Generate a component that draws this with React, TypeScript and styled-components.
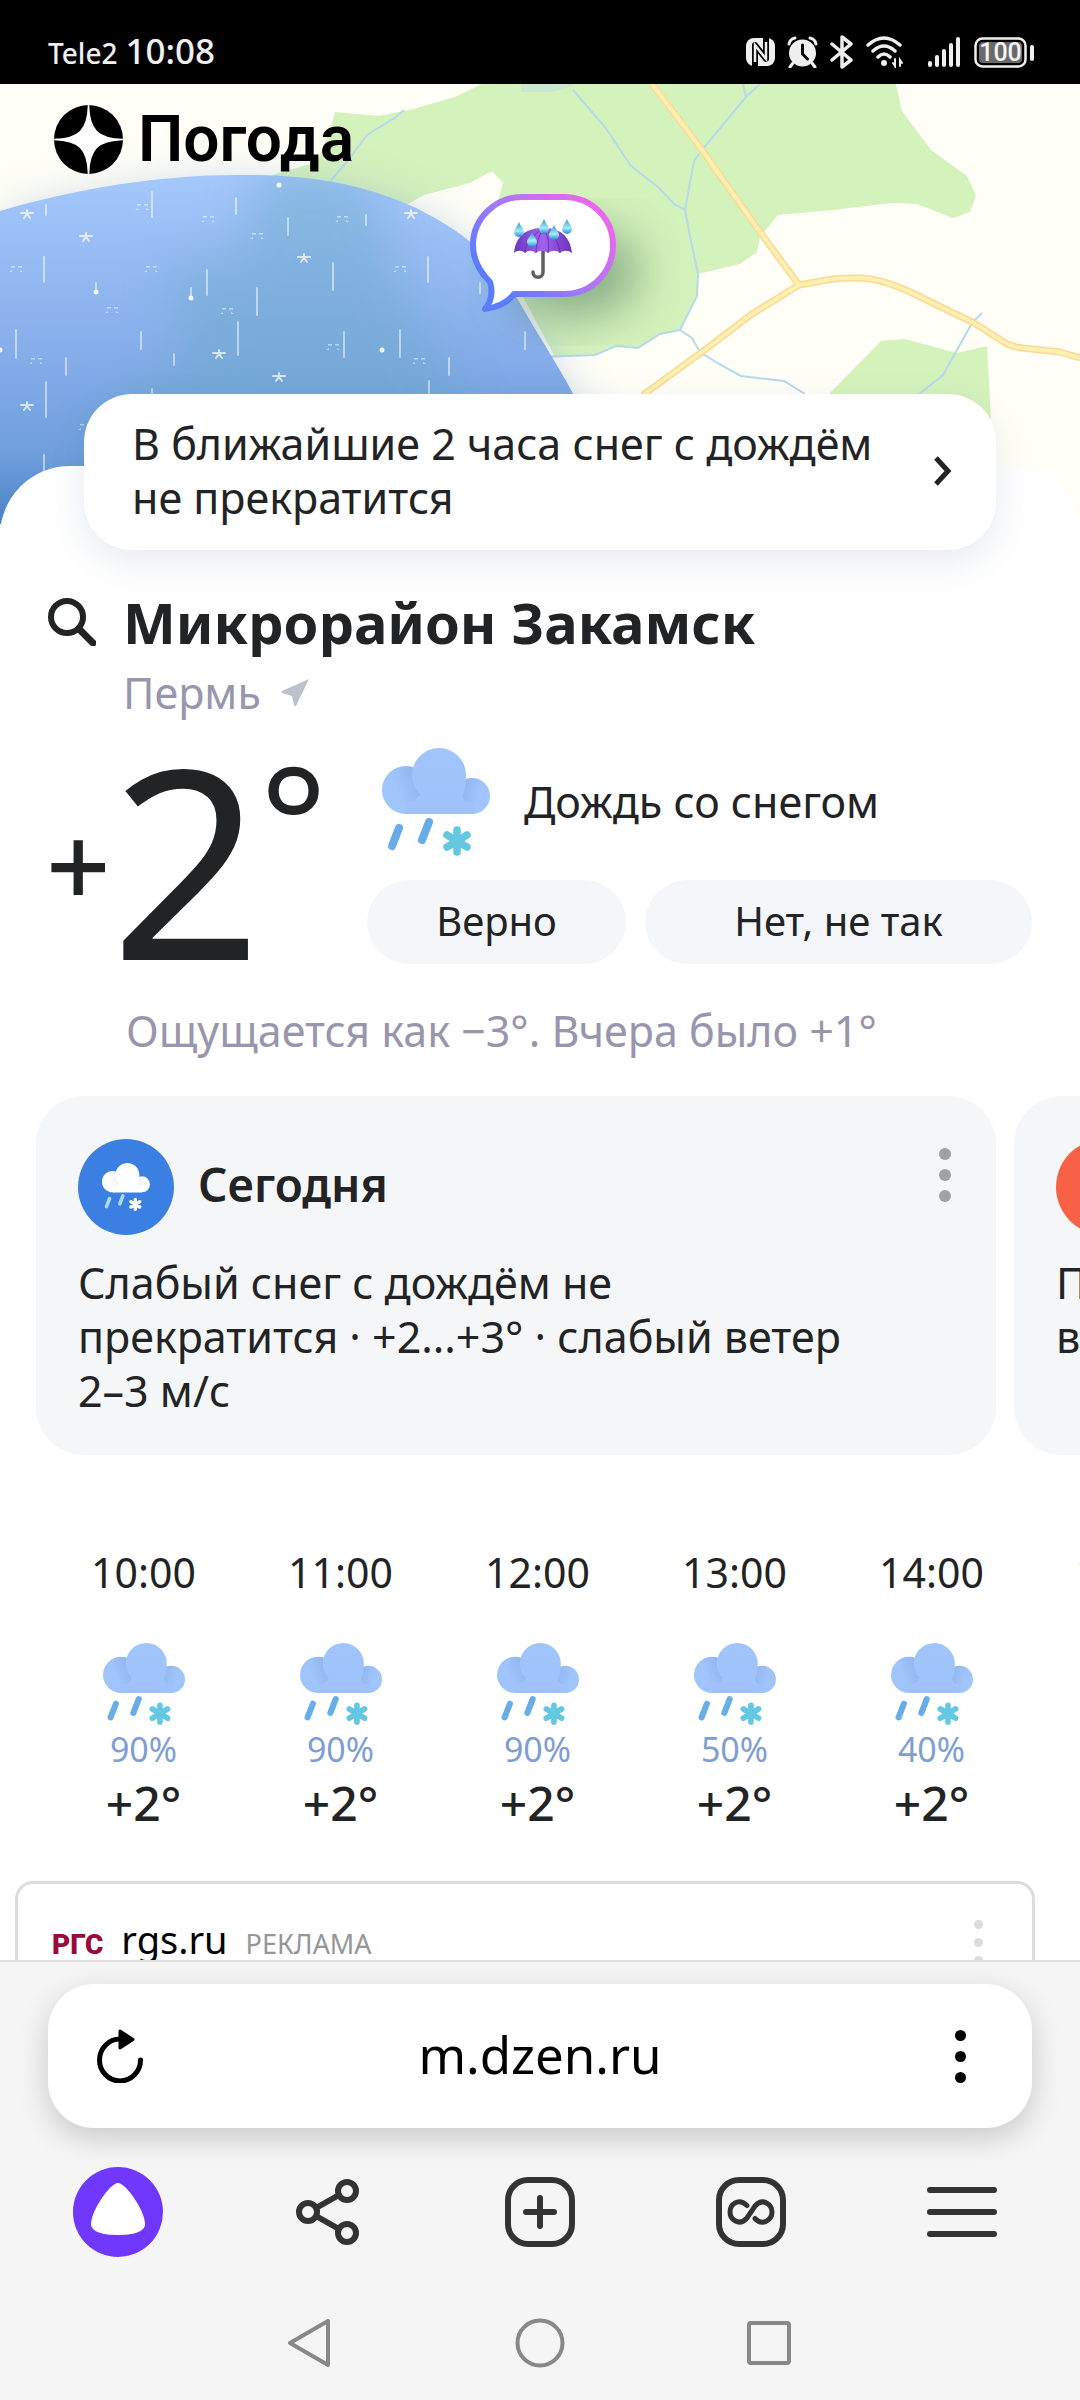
import React, { useId } from "react";
import styled, { createGlobalStyle } from "styled-components";

const ink = "#222324";
const muted = "#9896ad";

const GlobalStyle = createGlobalStyle`
  *, *::before, *::after { box-sizing: border-box; }
  body { margin: 0; background: #fff; }
  body, button, input { font-family: "Noto Sans", "Open Sans", sans-serif; color: ${ink}; }
  button { border: 0; padding: 0; background: none; cursor: pointer; }
  a { color: inherit; text-decoration: none; }
  h1, h2, p, ol { margin: 0; padding: 0; }
  svg { display: block; flex: none; }
`;

const Screen = styled.div`
  display: flex;
  flex-direction: column;
  height: 100vh;
  overflow: hidden;
`;

/* ---------- status bar ---------- */

const StatusBar = styled.header`
  display: flex;
  flex: none;
  align-items: center;
  justify-content: space-between;
  padding: 20px 46px 0 48px;
  height: 84px;
  background: #000;
  color: #efefef;
`;

const Carrier = styled.div`
  display: flex;
  align-items: baseline;
  gap: 8px;
  font: 500 28px/64px "Noto Sans", sans-serif;
`;

const Clock = styled.time`
  font-size: 35px;
`;

const StatusIcons = styled.div`
  display: flex;
  align-items: center;
  gap: 12px;
`;

/* ---------- page ---------- */

const Page = styled.main`
  flex: 1;
  min-height: 0;
  overflow: hidden;
`;

const Hero = styled.section`
  position: relative;
  height: 440px;
  padding: 21px 54px;
  overflow: hidden;
`;

const MapArt = styled.svg`
  position: absolute;
  inset: 0;
  width: 100%;
  height: 100%;
`;

const Brand = styled.a`
  position: relative;
  display: inline-flex;
  align-items: center;
  gap: 15px;
  height: 69px;
  color: #000;
  font: 600 64px/69px Roboto, sans-serif;
`;

const MapPin = styled.button`
  position: absolute;
  top: 109px;
  left: calc(50% - 71px);
`;

/* As a flex container the sheet does not take on the card's negative margin,
   so the card is pulled up over the edge of the map. */
const Sheet = styled.div`
  position: relative;
  display: flex;
  flex-direction: column;
  margin-top: -58px;
  border-radius: 70px 70px 0 0;
  background: #fff;
`;

const Nowcast = styled.a`
  display: flex;
  align-items: center;
  justify-content: space-between;
  gap: 36px;
  margin: -72px 84px 36px;
  padding: 23px 43px 25px 48px;
  border-radius: 48px;
  background: #fff;
  box-shadow: 0 12px 36px rgba(60, 80, 120, 0.12);
`;

const Body = styled.p`
  font-size: 43px;
  line-height: 54px;
`;

const Place = styled.section`
  display: grid;
  grid-template-columns: 48px 1fr;
  column-gap: 27px;
  align-items: center;
  padding: 0 48px;
`;

const PlaceName = styled.h1`
  font-size: 56px;
  font-weight: 700;
  line-height: 72px;
`;

const District = styled.p`
  display: flex;
  grid-column: 2;
  align-items: center;
  gap: 20px;
  margin-top: 8px;
  color: ${muted};
  font-size: 43px;
  line-height: 54px;
`;

const Now = styled.section`
  display: flex;
  justify-content: space-between;
  margin-top: 28px;
  padding: 0 48px 0 46px;
`;

const Temperature = styled.div`
  display: flex;
  align-items: center;
  height: 216px;
`;

const Sign = styled.span`
  padding-top: 16px;
  font-size: 113px;
  font-weight: 500;
  line-height: 200px;
`;

const Degrees = styled.span`
  padding-top: 4px;
  font-size: 264px;
  line-height: 212px;
`;

const DegreeMark = styled.span`
  align-self: flex-start;
  margin-left: -2px;
  font-size: 158px;
  line-height: 144px;
`;

const Condition = styled.div`
  display: flex;
  flex-direction: column;
  gap: 24px;
`;

const ConditionRow = styled.div`
  display: flex;
  align-items: center;
  gap: 34px;
  padding-left: 15px;
`;

const Answers = styled.div`
  display: grid;
  grid-template-columns: 259px 387px;
  gap: 19px;
`;

const Answer = styled.button`
  height: 84px;
  padding-bottom: 4px;
  border-radius: 42px;
  background: #f4f6fa;
  font-size: 40px;
`;

const FeelsLike = styled.p`
  margin: 40px 0 38px;
  padding: 0 126px;
  color: ${muted};
  font-size: 43px;
  line-height: 54px;
  white-space: nowrap;
`;

const Cards = styled.section`
  display: flex;
  gap: 18px;
  padding-left: 36px;
  overflow: hidden;
`;

const Card = styled.article`
  flex: none;
  width: calc(100% - 84px);
  padding: 43px 42px 37px;
  border-radius: 48px;
  background: #f5f6f8;
`;

const CardHead = styled.header`
  display: flex;
  gap: 24px;
  align-items: center;
  margin-bottom: 21px;
`;

const CardBadge = styled.span<{ $color: string }>`
  display: grid;
  place-items: center;
  width: 96px;
  height: 96px;
  border-radius: 50%;
  background: ${(p) => p.$color};
`;

const CardTitle = styled.h2`
  flex: 1;
  padding-bottom: 6px;
  font-size: 46px;
  font-weight: 600;
  line-height: 54px;
`;

const CardText = styled(Body)`
  max-width: 800px;
  min-height: 162px;
`;

const Dots = styled.span<{ $size: number; $gap: number; $color: string }>`
  display: flex;
  flex-direction: column;
  gap: ${(p) => p.$gap}px;

  i {
    width: ${(p) => p.$size}px;
    height: ${(p) => p.$size}px;
    border-radius: 50%;
    background: ${(p) => p.$color};
  }
`;

const CardMenu = styled.button`
  align-self: flex-start;
  padding: 9px 3px;
`;

const Hours = styled.ol`
  display: flex;
  margin: 90px 0 48px;
  padding-left: 45px;
  overflow: hidden;
  list-style: none;
`;

const Hour = styled.li`
  display: flex;
  flex: none;
  flex-direction: column;
  align-items: center;
  width: 197px;
`;

const HourTime = styled.time`
  margin-bottom: 44px;
  font-size: 41px;
  line-height: 54px;
`;

const Chance = styled.span`
  margin: 6px 0;
  color: #7f9ed3;
  font-size: 34px;
  line-height: 36px;
`;

const HourTemp = styled.span`
  font-size: 48px;
  font-weight: 500;
  line-height: 60px;
`;

const Ad = styled.aside`
  display: flex;
  align-items: flex-start;
  justify-content: space-between;
  margin: 0 45px 0 15px;
  padding: 28px 49px 60px 34px;
  border: 3px solid #dcdcda;
  border-radius: 18px;
`;

const AdLink = styled.a`
  display: flex;
  align-items: baseline;
  gap: 18px;
  color: #000;
  font-size: 38px;
  line-height: 54px;
`;

const AdLogo = styled.b`
  color: #980b3c;
  font: 900 28px/54px Roboto, sans-serif;
`;

const AdLabel = styled.small`
  color: #969696;
  font-size: 27px;
`;

const AdMenu = styled.button`
  padding-top: 8px;
`;

/* ---------- browser chrome ---------- */

const Chrome = styled.footer`
  flex: none;
  padding: 22px 0 32px;
  border-top: 2px solid #dedede;
  background: #f5f5f5;
`;

const AddressBar = styled.div`
  display: flex;
  align-items: center;
  justify-content: space-between;
  height: 144px;
  margin: 0 48px;
  padding: 0 48px;
  border-radius: 46px;
  background: #fff;
  box-shadow: 0 10px 30px rgba(0, 0, 0, 0.18);
`;

const AddressMenu = styled.button`
  display: flex;
  justify-content: center;
  width: 48px;
`;

const Address = styled.input`
  flex: 1;
  min-width: 0;
  padding: 0 0 4px;
  border: 0;
  outline: 0;
  background: none;
  color: #000;
  font-size: 51px;
  text-align: center;
`;

const Toolbar = styled.nav`
  display: grid;
  grid-template-columns: repeat(5, 1fr);
  place-items: center;
  margin-top: 39px;
  padding: 0 12px;
`;

const SystemNav = styled.nav`
  display: flex;
  align-items: center;
  justify-content: center;
  gap: 180px;
  margin-top: 61px;
`;

/* ---------- drawings ---------- */

function Sleet({ size, white = false }: { size: number; white?: boolean }) {
  const id = useId();
  const base = white ? "#fff" : "#a0c5fb";
  const shade = white ? "#e6eefb" : "#8fb4ee";
  const drop = white ? "#a9dcfb" : "#68ade8";
  const flake = white ? "#fff" : "#64c8e2";
  return (
    <svg width={size} height={size} viewBox="0 0 108 108" aria-hidden="true">
      <defs>
        <linearGradient id={id + "l"} x1="0" x2="1" y1=".7" y2=".3">
          <stop offset=".35" stopColor={base} />
          <stop offset=".85" stopColor={shade} />
        </linearGradient>
        <linearGradient id={id + "r"} x1="1" x2="0" y1=".6" y2=".3">
          <stop offset=".3" stopColor={base} />
          <stop offset=".9" stopColor={shade} />
        </linearGradient>
        <linearGradient id={id + "b"} x1="0" x2="0" y1="0" y2="1">
          <stop offset="0" stopColor={base} />
          <stop offset="1" stopColor={white ? "#fff" : "#9ec2f9"} />
        </linearGradient>
      </defs>
      <circle cx="24" cy="42" r="24" fill={`url(#${id}l)`} />
      <circle cx="90" cy="48" r="18" fill={`url(#${id}r)`} />
      <path
        d="M57 0a27 27 0 0 1 27 27c0 10-1 16-4 21l10 18H24l14-20c-5-5-8-11-8-19A27 27 0 0 1 57 0Z"
        fill={`url(#${id}b)`}
      />
      <path d="M24 54h66v12H24z" fill={white ? "#fff" : "#9ec2f9"} />
      <g strokeLinecap="round" strokeWidth="8" stroke={drop}>
        <path d="M17 80l-7 18M47 74l-7 18" />
      </g>
      <path
        d="M75 82v22M65 87l20 12M85 87L65 99"
        stroke={flake}
        strokeWidth="7.5"
        strokeLinecap="round"
      />
    </svg>
  );
}

const streaks: [number, number, number][] = [
  [46, 121, 131], [152, 108, 133], [236, 114, 130], [288, 134, 151], [366, 131, 141],
  [44, 173, 198], [207, 186, 211], [333, 179, 206], [428, 173, 198], [96, 199, 209],
  [191, 204, 215], [257, 204, 231], [238, 238, 271], [16, 246, 274], [141, 248, 265],
  [344, 248, 273], [400, 246, 273], [174, 270, 281], [66, 274, 291], [449, 274, 291],
  [46, 298, 333], [429, 297, 310], [152, 305, 320], [525, 248, 265], [480, 199, 209],
  [44, 371, 388],
];
const flakes = [[27, 130], [411, 130], [86, 153], [304, 174], [219, 270], [279, 293], [27, 322]];
const specks = [
  [142, 123], [208, 135], [342, 135], [257, 152], [112, 226], [227, 227], [333, 263],
  [419, 277], [36, 277], [16, 185], [151, 185], [400, 185], [85, 343],
];
const pearls = [[279, 101], [382, 266], [96, 208], [191, 214], [0, 266]];

const roads =
  "M652 0L702 66L760 148L799 201L833 195Q852 193 871 195Q888 198 908 207L974 239L1007 260Q1014 263 1022 264L1060 268L1080 274M799 201L752 230L702 268L643 311";

function MapDrawing() {
  return (
    <MapArt viewBox="0 0 1080 440" preserveAspectRatio="xMidYMin slice" aria-hidden="true">
      <defs>
        <linearGradient id="rainSky" x1="0" x2="0" y1="90" y2="440" gradientUnits="userSpaceOnUse">
          <stop offset="0" stopColor="#a5c8fc" />
          <stop offset=".5" stopColor="#86aeea" />
          <stop offset=".8" stopColor="#6f9fdd" />
          <stop offset="1" stopColor="#4a82c4" />
        </linearGradient>
        <clipPath id="rainClip">
          <path d="M0 127C80 103 170 90 245 91C320 91 370 103 416 124C460 146 490 168 518 216C545 262 560 285 575 313L640 440H0Z" />
        </clipPath>
        <filter id="soft" x="-30%" y="-30%" width="160%" height="160%">
          <feGaussianBlur stdDeviation="24" />
        </filter>
      </defs>
      <path fill="#fffff7" d="M0 0h1080v440H0z" />
      <path
        fill="#d4f2bc"
        d="M482 0L455 13L413 25L379 32L335 28L331 44L317 78L272 91L360 140L410 119L424 111L470 99L492 87L503 99L499 113L495 160L555 273L595 271L616 262L638 264L660 250L680 246L697 212L698 190L740 180L757 168L760 153L778 131L833 126L891 119L917 120L953 134L970 128L976 112L967 92L931 66L902 27L896 0Z"
      />
      <path fill="#d4f2bc" d="M828 311L881 257L905 255L957 269L987 262L991 334L985 440H828Z" />
      <path fill="#cbe6d1" d="M521 0H577Q560 7 548 8H521Z" />
      <path
        fill="none"
        stroke="#b5daea"
        strokeWidth="2"
        d="M573 6L605 43L631 82L659 104L674 120L685 126L694 77L702 66L746 13L760 0M743 0L746 13M685 126L692 162L698 190L697 212L680 246L692 254L700 268L719 280L741 292L784 297L805 310M680 246L660 250L638 264L616 262L595 271L540 273M982 229L972 239L943 291L919 310M404 26L396 33L367 51L350 74L329 99"
      />
      <path d={roads} fill="none" stroke="#fbd994" strokeWidth="7" strokeLinejoin="round" />
      <path d={roads} fill="none" stroke="#fdf0b0" strokeWidth="4" strokeLinejoin="round" />
      <path
        d="M0 137C80 113 170 100 245 101C320 101 370 113 416 134C460 156 490 178 518 226L640 440H0Z"
        fill="#7a97c8"
        opacity=".45"
        filter="url(#soft)"
      />
      <g clipPath="url(#rainClip)">
        <path fill="url(#rainSky)" d="M0 80h650v360H0z" />
        <path
          d="M260 80L370 90L400 200L470 330L440 440H60L110 330L190 270L160 190L240 170Z"
          fill="#66a8c4"
          opacity=".42"
          filter="url(#soft)"
        />
        <g stroke="#fff" strokeWidth="2" strokeLinecap="round" opacity=".5">
          {streaks.map(([x, a, b]) => (
            <path key={`${x}-${a}`} d={`M${x} ${a}V${b}`} />
          ))}
        </g>
        <g fill="none" stroke="#fff" strokeWidth="2" strokeLinecap="round" opacity=".7">
          {flakes.map(([x, y]) => (
            <path key={`${x}-${y}`} d={`M${x} ${y - 4}v4m-6 -1h12m-9 5l3 -4l3 4`} />
          ))}
        </g>
        <g fill="#fff" opacity=".5">
          {specks.map(([x, y]) => (
            <path
              key={`${x}-${y}`}
              d={`M${x - 7} ${y + 3}l3 -2v2zM${x + 4} ${y + 1}l3 2h-3zM${x - 5} ${y - 3}h4v1.500h-4zM${x + 2} ${y - 3}h4v1.500h-4z`}
            />
          ))}
        </g>
        <g fill="#fff" opacity=".9">
          {pearls.map(([x, y]) => (
            <circle key={`${x}-${y}`} cx={x} cy={y} r="2.500" />
          ))}
        </g>
      </g>
      <ellipse cx="574" cy="188" rx="66" ry="46" fill="#3c6a50" opacity=".5" filter="url(#soft)" />
    </MapArt>
  );
}

function UmbrellaBubble() {
  return (
    <svg width="148" height="120" viewBox="0 0 148 120" aria-hidden="true">
      <defs>
        <linearGradient id="ring" x1="0" y1="1" x2="1" y2=".2">
          <stop offset=".2" stopColor="#5b7cfb" />
          <stop offset=".55" stopColor="#a478f6" />
          <stop offset=".95" stopColor="#e868f0" />
        </linearGradient>
        <linearGradient id="dome" x1="0" x2="1">
          <stop offset="0" stopColor="#6a35c4" />
          <stop offset=".5" stopColor="#a561ee" />
          <stop offset="1" stopColor="#6c30bb" />
        </linearGradient>
        <linearGradient id="drop" x1="0" x2="0" y1="0" y2="1">
          <stop offset="0" stopColor="#2f93cd" />
          <stop offset=".6" stopColor="#a6ecfb" />
          <stop offset="1" stopColor="#1f86cb" />
        </linearGradient>
      </defs>
      <path
        d="M53 4H95C123 4 144 26 144 52C144 79 123 101 95 101H45C39 110 26 115 16 116C22 109 24 99 21 89C11 79 4 67 4 52C4 26 26 4 53 4Z"
        fill="#fff"
        stroke="url(#ring)"
        strokeWidth="6"
        strokeLinejoin="round"
      />
      <path d="M74 56V79c0 7-10 7-10 0" fill="none" stroke="#5f5f63" strokeWidth="3.500" strokeLinecap="round" />
      <path
        d="M45 60C47 42 58 35 74 35S101 42 103 60C99 57 94 57 91 60C88 57 82 57 79 60C75 57 70 57 67 60C63 57 59 57 56 60C53 57 48 57 45 60Z"
        fill="url(#dome)"
      />
      <path
        d="M74 35C66 42 56 48 56 60M74 35C70 44 67 50 67 60M74 35C80 44 80 50 79 60M74 35C84 42 90 48 91 60"
        fill="none"
        stroke="#4c2191"
        strokeWidth="1"
        opacity=".6"
      />
      {[[50, 29], [75, 26], [98, 26], [63, 39], [85, 32]].map(([x, y]) => (
        <path
          key={x}
          d={`M${x} ${y}c2 5 5 7 5 10a5 5 0 0 1-10 0c0-3 3-5 5-10z`}
          fill="url(#drop)"
        />
      ))}
    </svg>
  );
}

function DotMenu({ size, gap, color }: { size: number; gap: number; color: string }) {
  return (
    <Dots $size={size} $gap={gap} $color={color} aria-hidden="true">
      <i />
      <i />
      <i />
    </Dots>
  );
}

const hours = [
  { time: "10:00", chance: "90%" },
  { time: "11:00", chance: "90%" },
  { time: "12:00", chance: "90%" },
  { time: "13:00", chance: "50%" },
  { time: "14:00", chance: "40%" },
  { time: "15:00", chance: "40%" },
];

export default function App() {
  return (
    <Screen>
      <GlobalStyle />
      <StatusBar>
        <Carrier>
          Tele2 <Clock>10:08</Clock>
        </Carrier>
        <StatusIcons aria-hidden="true">
          <svg width="29" height="30" viewBox="0 0 29 30">
            <rect y="1" width="29" height="28" rx="8" fill="#efefef" />
            <path d="M9 29V8L20 22V1" fill="none" stroke="#000" strokeWidth="6" strokeLinejoin="round" />
            <path d="M9 25V8L20 22V5" fill="none" stroke="#efefef" strokeWidth="2.500" />
          </svg>
          <svg width="31" height="32" viewBox="0 0 31 32">
            <circle cx="15.500" cy="17" r="13.500" fill="#efefef" />
            <path d="M2 8Q3 3 8 2M29 8Q28 3 23 2M6 27l-3 4M25 27l3 4" stroke="#efefef" strokeWidth="3" fill="none" strokeLinecap="round" />
            <path d="M15.500 9v9l5 5" stroke="#000" strokeWidth="3" fill="none" strokeLinecap="round" />
          </svg>
          <svg width="24" height="34" viewBox="0 0 24 34">
            <path d="M2 9L21 25L12 32V2L21 9L2 25" fill="none" stroke="#efefef" strokeWidth="3.500" strokeLinejoin="round" strokeLinecap="round" />
          </svg>
          <svg width="38" height="32" viewBox="0 0 38 32">
            <g fill="none" stroke="#efefef" strokeWidth="3.500" strokeLinecap="round">
              <path d="M2 9Q18 -5 34 9M7 15Q18 5 29 15M12 21Q18 15 24 21" />
              <path d="M29 23v7l-2-3M34 30v-6l2 3" strokeWidth="2" />
            </g>
            <circle cx="18" cy="27" r="3" fill="#efefef" />
          </svg>
          <svg width="46" height="32" viewBox="0 0 46 32">
            <path d="M14 29v-2M21 29v-8M28 29V15M35 29V9M42 29V3" stroke="#efefef" strokeWidth="4" strokeLinecap="round" />
          </svg>
          <svg width="60" height="31" viewBox="0 0 60 31">
            <rect x="1.500" y="1.500" width="50" height="28" rx="7" fill="none" stroke="#efefef" strokeWidth="2.500" />
            <rect x="5" y="5" width="43" height="21" rx="4" fill="#6a6a6a" />
            <rect x="56" y="8" width="4" height="16" rx="2" fill="#efefef" />
            <text x="26.500" y="24" textAnchor="middle" fontFamily="Roboto, sans-serif" fontWeight="500" fontSize="25" fill="#f5f5f5">100</text>
          </svg>
        </StatusIcons>
      </StatusBar>

      <Page>
        <Hero>
          <MapDrawing />
          <Brand href="#weather">
            <svg width="69" height="69" viewBox="0 0 69 69" aria-hidden="true">
              <circle cx="34.500" cy="34.500" r="34.500" />
              <path d="M34.500 0C35 25 44 34 69 34.500C44 35 35 44 34.500 69C34 44 25 35 0 34.500C25 34 34 25 34.500 0Z" fill="#fff" stroke="#fff" strokeWidth="1.500" />
            </svg>
            Погода
          </Brand>
          <MapPin aria-label="Осадки на карте">
            <UmbrellaBubble />
          </MapPin>
        </Hero>

        <Sheet>
          <Nowcast href="#nowcast">
            <Body>
              В ближайшие 2 часа снег с дождём
              <br />
              не прекратится
            </Body>
            <svg width="20" height="32" viewBox="0 0 20 32" aria-hidden="true">
              <path d="M3 3L15 16L3 29" fill="none" stroke={ink} strokeWidth="5" />
            </svg>
          </Nowcast>

          <Place>
            <svg width="48" height="48" viewBox="0 0 48 48" aria-hidden="true">
              <circle cx="19" cy="19" r="16" fill="none" stroke={ink} strokeWidth="6" />
              <path d="M31 31L45 45" stroke={ink} strokeWidth="7" strokeLinecap="round" />
            </svg>
            <PlaceName>Микрорайон Закамск</PlaceName>
            <District>
              Пермь
              <svg width="28" height="28" viewBox="0 0 28 28" aria-hidden="true">
                <path d="M28 0L15 27Q14 28 13 26L11 17L1 14Q0 13 1 12Z" fill="#bcc1cc" />
              </svg>
            </District>
          </Place>

          <Now>
            <Temperature>
              <Sign>+</Sign>
              <Degrees>2</Degrees>
              <DegreeMark>°</DegreeMark>
            </Temperature>
            <Condition>
              <ConditionRow>
                <Sleet size={108} />
                <Body>Дождь со снегом</Body>
              </ConditionRow>
              <Answers>
                <Answer>Верно</Answer>
                <Answer>Нет, не так</Answer>
              </Answers>
            </Condition>
          </Now>
          <FeelsLike>Ощущается как −3°. Вчера было +1°</FeelsLike>

          <Cards>
            <Card>
              <CardHead>
                <CardBadge $color="#3b7fe2">
                  <Sleet size={48} white />
                </CardBadge>
                <CardTitle>Сегодня</CardTitle>
                <CardMenu aria-label="Ещё">
                  <DotMenu size={12} gap={9} color="#a0a1a3" />
                </CardMenu>
              </CardHead>
              <CardText>Слабый снег с дождём не прекратится · +2...+3° · слабый ветер 2–3 м/с</CardText>
            </Card>
            <Card>
              <CardHead>
                <CardBadge $color="#f96146" />
              </CardHead>
              <CardText>
                П
                <br />в
              </CardText>
            </Card>
          </Cards>

          <Hours>
            {hours.map((h) => (
              <Hour key={h.time}>
                <HourTime>{h.time}</HourTime>
                <Sleet size={82} />
                <Chance>{h.chance}</Chance>
                <HourTemp>+2°</HourTemp>
              </Hour>
            ))}
          </Hours>

          <Ad>
            <AdLink href="#ad">
              <AdLogo>РГС</AdLogo>
              rgs.ru
              <AdLabel>РЕКЛАМА</AdLabel>
            </AdLink>
            <AdMenu aria-label="Меню рекламы">
              <DotMenu size={9} gap={9} color="#dcdcdc" />
            </AdMenu>
          </Ad>
        </Sheet>
      </Page>

      <Chrome>
        <AddressBar>
          <button aria-label="Обновить">
            <svg width="48" height="54" viewBox="0 0 48 54">
              <path d="M24 10A20.500 21 0 1 0 44.500 31" fill="none" stroke="#000" strokeWidth="5" strokeLinecap="round" />
              <path d="M24 2L37 10.500L24 19Z" stroke="#000" strokeWidth="3" strokeLinejoin="round" />
            </svg>
          </button>
          <Address aria-label="Адрес" defaultValue="m.dzen.ru" />
          <AddressMenu aria-label="Меню страницы">
            <DotMenu size={11} gap={10} color="#000" />
          </AddressMenu>
        </AddressBar>

        <Toolbar>
          <button aria-label="Алиса">
            <svg width="90" height="90" viewBox="0 0 90 90">
              <circle cx="45" cy="45" r="45" fill="#7038fd" />
              <path d="M45 16C53 16 72 44 72 57C72 65 60 68 45 68S18 65 18 57C18 44 37 16 45 16Z" fill="#fff" />
            </svg>
          </button>
          <button aria-label="Поделиться">
            <svg width="66" height="68" viewBox="0 0 66 68" fill="none" stroke="#333" strokeWidth="6">
              <circle cx="12" cy="34" r="9" />
              <circle cx="51" cy="13" r="9" />
              <circle cx="51" cy="55" r="9" />
              <path d="M20 30L43 17M20 38L43 51" />
            </svg>
          </button>
          <button aria-label="Новая вкладка">
            <svg width="70" height="70" viewBox="0 0 70 70" fill="none" stroke="#333" strokeWidth="6" strokeLinecap="round">
              <rect x="3" y="3" width="64" height="64" rx="20" />
              <path d="M35 21v28M21 35h28" />
            </svg>
          </button>
          <button aria-label="Вкладки">
            <svg width="70" height="70" viewBox="0 0 70 70" fill="none" stroke="#333" strokeWidth="6" strokeLinecap="round">
              <rect x="3" y="3" width="64" height="64" rx="20" />
              <path d="M31 28.500C22 20 14 28 14 35S23 50 31 41L39 29C47 20 56 28 56 35S47 50 39 41.500" strokeWidth="5" />
            </svg>
          </button>
          <button aria-label="Меню">
            <svg width="70" height="54" viewBox="0 0 70 54" stroke="#333" strokeWidth="6" strokeLinecap="round">
              <path d="M3 5h64M3 27h64M3 49h64" />
            </svg>
          </button>
        </Toolbar>

        <SystemNav>
          <button aria-label="Назад">
            <svg width="48" height="50" viewBox="0 0 48 50">
              <path d="M41 3V47L3 25Z" fill="none" stroke="#888" strokeWidth="4" strokeLinejoin="round" />
            </svg>
          </button>
          <button aria-label="Домой">
            <svg width="50" height="50" viewBox="0 0 50 50">
              <circle cx="25" cy="25" r="22.500" fill="none" stroke="#888" strokeWidth="4" />
            </svg>
          </button>
          <button aria-label="Недавние">
            <svg width="48" height="50" viewBox="0 0 48 50">
              <rect x="4" y="5" width="40" height="40" rx="2" fill="none" stroke="#888" strokeWidth="4" />
            </svg>
          </button>
        </SystemNav>
      </Chrome>
    </Screen>
  );
}
